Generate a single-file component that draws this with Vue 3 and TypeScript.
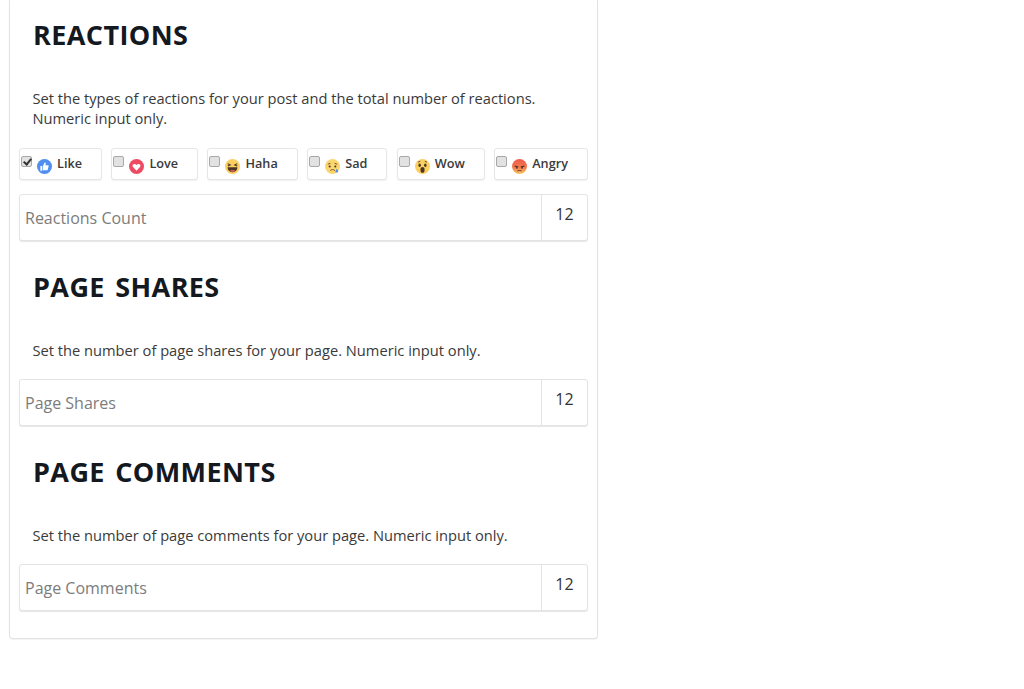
<script setup lang="ts">
interface Reaction {
  name: string
  checked: boolean
}
const reactions: Reaction[] = [
  { name: 'Like', checked: true },
  { name: 'Love', checked: false },
  { name: 'Haha', checked: false },
  { name: 'Sad', checked: false },
  { name: 'Wow', checked: false },
  { name: 'Angry', checked: false },
]
</script>

<template>
  <main class="page">
    <section class="card">
      <h2 class="title first">REACTIONS</h2>
      <p class="desc two">Set the types of reactions for your post and the total number of reactions.<br />Numeric input only.</p>
      <div class="chips">
        <label v-for="r in reactions" :key="r.name" class="chip">
          <input type="checkbox" class="check" :checked="r.checked" />
          <svg class="emo" viewBox="0 0 16 16" aria-hidden="true">
            <template v-if="r.name === 'Like'">
              <circle cx="8" cy="8" r="8" fill="#4f8ff0" />
              <path d="M3.6 7.4h2v5h-2zM6.3 7.4l1.8-3.6c.9-.2 1.4.5 1.2 1.4l-.3 1.4h2.6c.7 0 1 .6.8 1.2l-1 3.600c-.1.4-.4.6-.8.6H6.300z" fill="#fff" />
            </template>
            <template v-else-if="r.name === 'Love'">
              <circle cx="8" cy="8" r="8" fill="#ee4a63" />
              <path d="M8 12.400 4.300 8.600c-1-1.100-.6-3 1-3.300.9-.2 2 .2 2.700 1.200.7-1 1.800-1.400 2.700-1.200 1.600.3 2 2.200 1 3.300z" fill="#fff" />
            </template>
            <template v-else-if="r.name === 'Haha'">
              <circle cx="8" cy="8" r="8" fill="#fbcf60" />
              <path d="M3 5l2.600 1.300L3 7.400M13 5l-2.600 1.300L13 7.400" fill="none" stroke="#4a3526" stroke-width="1.100" />
              <path d="M2.800 8.800h10.400c0 3-2.200 5.200-5.200 5.200s-5.200-2.200-5.200-5.200z" fill="#4a3526" />
              <path d="M5 12.600c1.600-1.100 4.400-1.100 6 0-1.700 1.300-4.300 1.300-6 0z" fill="#f0655f" />
            </template>
            <template v-else-if="r.name === 'Sad'">
              <circle cx="8" cy="8" r="8" fill="#fbd56e" />
              <circle cx="5" cy="8" r="1.100" fill="#4a3526" />
              <circle cx="11" cy="8" r="1.100" fill="#4a3526" />
              <path d="M3 5.600l2.800-1M13 5.600l-2.800-1M5.600 12.200c1.400-1.200 3.400-1.200 4.800 0" fill="none" stroke="#6a4c2f" stroke-width="1" />
              <path d="M12.600 10.400c.9 1.200 1.400 1.900 1.400 2.600a1.400 1.400 0 0 1-2.800 0c0-.7.500-1.400 1.400-2.600z" fill="#4f8ff0" />
            </template>
            <template v-else-if="r.name === 'Wow'">
              <circle cx="8" cy="8" r="8" fill="#fbcf60" />
              <ellipse cx="5" cy="6.600" rx="1.300" ry="1.900" fill="#4a3526" />
              <ellipse cx="11" cy="6.600" rx="1.300" ry="1.900" fill="#4a3526" />
              <path d="M3.200 3.400l2.400-1M12.800 3.400l-2.400-1" fill="none" stroke="#6a4c2f" stroke-width="1" />
              <ellipse cx="8" cy="11.600" rx="2.200" ry="3" fill="#4a3526" />
            </template>
            <template v-else>
              <defs>
                <linearGradient id="angryFill" x1="0" y1="0" x2="0" y2="1">
                  <stop offset="0" stop-color="#ee5a4a" />
                  <stop offset="0.55" stop-color="#f2794f" />
                  <stop offset="1" stop-color="#fbc763" />
                </linearGradient>
              </defs>
              <circle cx="8" cy="8" r="8" fill="url(#angryFill)" />
              <path d="M2.800 7.400l3.800 1.200M13.200 7.400l-3.800 1.200" fill="none" stroke="#4a2a20" stroke-width="1.100" />
              <circle cx="5.200" cy="9.400" r=".9" fill="#4a2a20" />
              <circle cx="10.800" cy="9.400" r=".9" fill="#4a2a20" />
              <path d="M5.800 12.800c1.300-.8 3.100-.8 4.400 0" fill="none" stroke="#4a2a20" stroke-width="1" />
            </template>
          </svg>
          <span class="chip-text">{{ r.name }}</span>
        </label>
      </div>
      <div class="field">
        <input class="field-input" type="text" placeholder="Reactions Count" />
        <span class="addon">12</span>
      </div>

      <h2 class="title">PAGE SHARES</h2>
      <p class="desc">Set the number of page shares for your page. Numeric input only.</p>
      <div class="field">
        <input class="field-input" type="text" placeholder="Page Shares" />
        <span class="addon">12</span>
      </div>

      <h2 class="title">PAGE COMMENTS</h2>
      <p class="desc">Set the number of page comments for your page. Numeric input only.</p>
      <div class="field">
        <input class="field-input" type="text" placeholder="Page Comments" />
        <span class="addon">12</span>
      </div>
    </section>
  </main>
</template>

<style>
html,
body {
  margin: 0;
  background: #fff;
}
</style>

<style scoped>
.page {
  width: 1024px;
  height: 689px;
  overflow: hidden;
  font-family: "Open Sans", "Liberation Sans", sans-serif;
  color: #333;
}
.card {
  box-sizing: border-box;
  width: 589px;
  margin-left: 9px;
  padding: 0 9px 27px;
  background: #fff;
  border: 1px solid #e3e3e3;
  border-top: none;
  border-radius: 0 0 4px 4px;
  box-shadow: 0 1px 1px rgba(0, 0, 0, 0.05);
}
.title {
  margin: 0 0 0 14px;
  padding-top: 29px;
  font-size: 27px;
  line-height: 34px;
  font-weight: 700;
  letter-spacing: 0.4px;
  word-spacing: 3px;
  color: #14181f;
}
.title.first {
  padding-top: 18px;
}
.desc {
  margin: 36px 0 19px 13.5px;
  font-size: 14.67px;
  line-height: 20px;
  color: #3a3a3a;
}
.desc.two {
  margin-bottom: 20px;
}
.chips {
  display: flex;
  justify-content: space-between;
  margin-bottom: 14px;
}
.chip {
  box-sizing: border-box;
  display: flex;
  align-items: center;
  height: 32px;
  padding: 0 19px 0 1px;
  background: #fff;
  border: 1px solid #e6e6e6;
  border-radius: 3px;
  box-shadow: 0 1px 1px rgba(0, 0, 0, 0.06);
  font-size: 12.7px;
  font-weight: 600;
  color: #3a3a3a;
}
.chip-text {
  margin-bottom: 2px;
}
.check {
  appearance: none;
  box-sizing: border-box;
  width: 11px;
  height: 11px;
  margin: 0 5px 5px 0;
  background: #e2e2e2;
  border: 1px solid #a8a8a8;
  border-radius: 2px;
  position: relative;
  flex: none;
}
.check:checked::after {
  content: "";
  position: absolute;
  left: 3px;
  top: 0;
  width: 3px;
  height: 6px;
  border: solid #333;
  border-width: 0 2px 2px 0;
  transform: rotate(40deg);
}
.emo {
  width: 15px;
  height: 15px;
  margin: 4px 5px 0 0;
  flex: none;
}
.field {
  box-sizing: border-box;
  display: flex;
  height: 47px;
  background: #fff;
  border: 1px solid #e4e4e4;
  border-radius: 3px;
  box-shadow: 0 1px 1px rgba(0, 0, 0, 0.1);
}
.field-input {
  flex: 1;
  min-width: 0;
  border: none;
  outline: none;
  padding: 0 5px;
  margin: 0;
  background: transparent;
  font-family: inherit;
  font-size: 16px;
  color: #555;
}
.field-input::placeholder {
  color: #7c7c7c;
  opacity: 1;
}
.addon {
  box-sizing: border-box;
  width: 46px;
  border-left: 1px solid #e4e4e4;
  padding-top: 7px;
  text-align: center;
  font-size: 16px;
  line-height: 24px;
  color: #333;
}
</style>
